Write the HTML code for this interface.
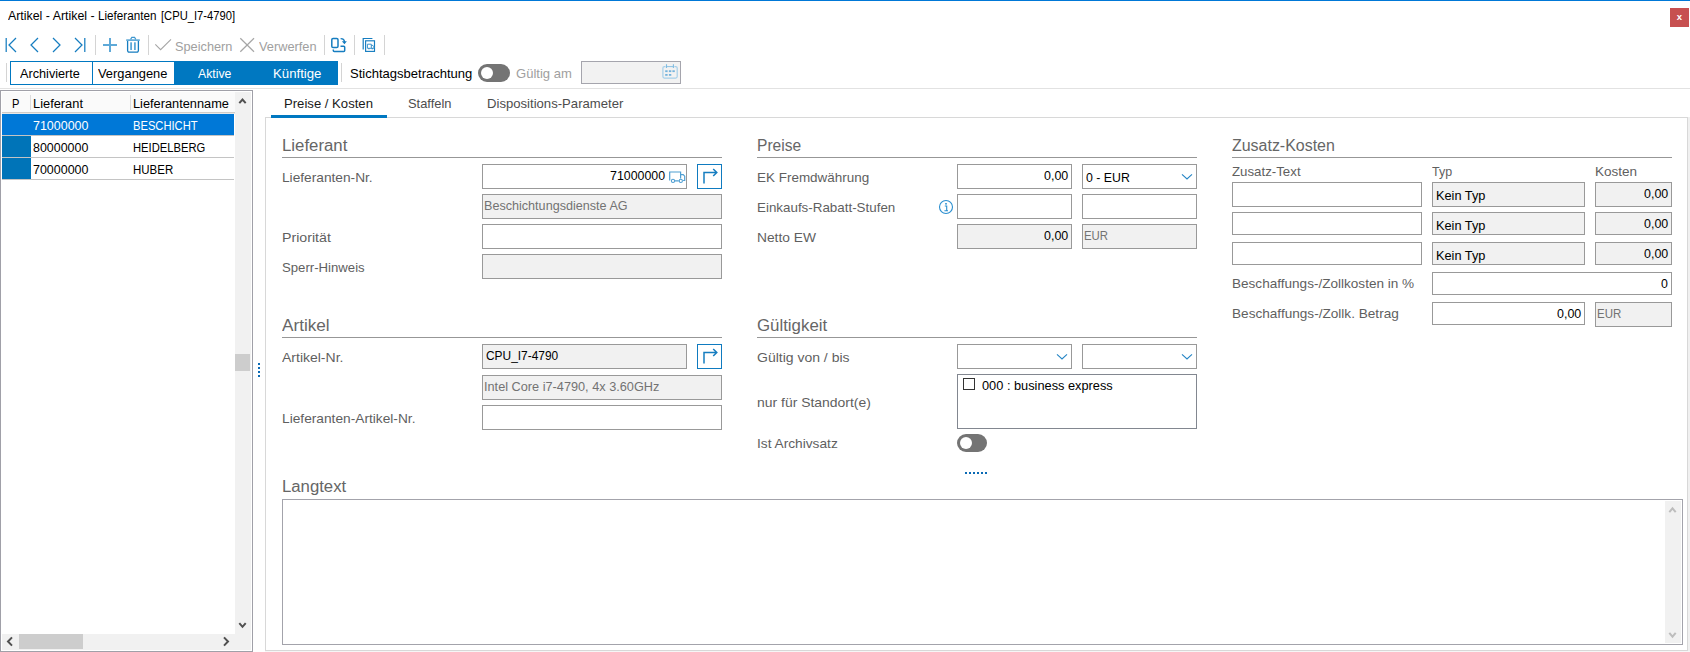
<!DOCTYPE html>
<html lang="de"><head><meta charset="utf-8"><title>Artikel - Lieferanten</title>
<style>
html,body{margin:0;padding:0}
body{width:1690px;height:652px;position:relative;overflow:hidden;background:#fff;font-family:"Liberation Sans",sans-serif;font-size:13px}
.b{position:absolute;border:1px solid #999;box-sizing:content-box}
.r{position:absolute}
.t{position:absolute;white-space:nowrap;transform-origin:0 0;display:block}
.s12{font-size:12px;line-height:20px;height:20px}
.s13{font-size:13px;line-height:21px;height:21px}
.s16{font-size:16px;line-height:21px;height:21px}
.ov{position:absolute;left:0;top:0;pointer-events:none}
.x{position:absolute;left:1670px;top:8px;width:19px;height:19px;line-height:17px;text-align:center;color:#fff;font-weight:bold;font-size:9.5px}
</style></head>
<body>
<div class="r" style="left:0px;top:0px;width:1690px;height:1px;background:#0078d7;"></div>
<div class="r" style="left:1670px;top:8px;width:19px;height:19px;background:#c75050;"></div>
<div class="r" style="left:95px;top:35px;width:1px;height:20px;background:#d4d4d4;"></div>
<div class="r" style="left:148px;top:35px;width:1px;height:20px;background:#d4d4d4;"></div>
<div class="r" style="left:324px;top:35px;width:1px;height:20px;background:#d4d4d4;"></div>
<div class="r" style="left:354px;top:35px;width:1px;height:20px;background:#d4d4d4;"></div>
<div class="r" style="left:384px;top:35px;width:1px;height:20px;background:#d4d4d4;"></div>
<div class="r" style="left:6px;top:63px;width:1px;height:19px;background:#d4d4d4;"></div>
<div class="r" style="left:10px;top:61px;width:328px;height:24px;background:#0078c1;"></div>
<div class="r" style="left:11px;top:62px;width:81px;height:22px;background:#fff;"></div>
<div class="r" style="left:93px;top:62px;width:81px;height:22px;background:#fff;"></div>
<div class="r" style="left:341px;top:63px;width:1px;height:19px;background:#d4d4d4;"></div>
<div class="r" style="left:478px;top:64px;width:32px;height:18px;border-radius:9px;background:#747474"></div>
<div class="r" style="left:481px;top:67px;width:12px;height:12px;border-radius:6px;background:#fff"></div>
<div class="b" style="left:581px;top:61px;width:98px;height:21px;background:#f2f2f2;border-color:#a5a5ad;"></div>
<div class="r" style="left:0px;top:88px;width:1690px;height:1px;background:#e2e2e2;"></div>
<div class="b" style="left:0px;top:90px;width:251px;height:560px;background:#fff;border-color:#a0a0a8;"></div>
<div class="r" style="left:2px;top:92px;width:233px;height:20px;background:#fafafa;"></div>
<div class="r" style="left:2px;top:112px;width:233px;height:1px;background:#d0ccc8;"></div>
<div class="r" style="left:2px;top:113px;width:233px;height:1px;background:#e8e8e8;"></div>
<div class="r" style="left:30px;top:95px;width:1px;height:15px;background:#dcdcdc;"></div>
<div class="r" style="left:130px;top:95px;width:1px;height:15px;background:#dcdcdc;"></div>
<div class="r" style="left:235px;top:92px;width:16px;height:558px;background:#f1f1f1;"></div>
<div class="r" style="left:2px;top:634px;width:233px;height:16px;background:#f1f1f1;"></div>
<div class="r" style="left:235px;top:354px;width:15px;height:17px;background:#cdcdcd;"></div>
<div class="r" style="left:19px;top:634px;width:64px;height:15px;background:#cdcdcd;"></div>
<div class="r" style="left:2px;top:114px;width:232px;height:21px;background:#0078d7;"></div>
<div class="r" style="left:2px;top:136px;width:29px;height:21px;background:#0074b8;"></div>
<div class="r" style="left:2px;top:158px;width:29px;height:21px;background:#0074b8;"></div>
<div class="r" style="left:2px;top:135px;width:232px;height:1px;background:#c4c4c4;"></div>
<div class="r" style="left:2px;top:157px;width:232px;height:1px;background:#c4c4c4;"></div>
<div class="r" style="left:2px;top:179px;width:232px;height:1px;background:#c4c4c4;"></div>
<div class="r" style="left:258px;top:363px;width:2px;height:2px;background:#0a6ab5;"></div>
<div class="r" style="left:258px;top:367px;width:2px;height:2px;background:#0a6ab5;"></div>
<div class="r" style="left:258px;top:371px;width:2px;height:2px;background:#0a6ab5;"></div>
<div class="r" style="left:258px;top:375px;width:2px;height:2px;background:#0a6ab5;"></div>
<div class="b" style="left:265px;top:117px;width:1421px;height:532px;background:#fff;border-color:#d8d8d8;"></div>
<div class="r" style="left:1688px;top:117px;width:2px;height:535px;background:#f0f0f0;"></div>
<div class="r" style="left:265px;top:651px;width:1425px;height:1px;background:#f6f6f6;"></div>
<div class="r" style="left:271px;top:115px;width:116px;height:3px;background:#0078c1;"></div>
<div class="r" style="left:282px;top:157px;width:440px;height:1px;background:#979797;"></div>
<div class="r" style="left:757px;top:157px;width:440px;height:1px;background:#979797;"></div>
<div class="r" style="left:1232px;top:157px;width:440px;height:1px;background:#979797;"></div>
<div class="r" style="left:282px;top:337px;width:440px;height:1px;background:#979797;"></div>
<div class="r" style="left:757px;top:337px;width:440px;height:1px;background:#979797;"></div>
<div class="b" style="left:482px;top:164px;width:203px;height:23px;background:#fff;border-color:#999999;"></div>
<div class="b" style="left:697px;top:164px;width:23px;height:23px;background:#fff;border-color:#0f7bc0;"></div>
<div class="b" style="left:482px;top:194px;width:238px;height:23px;background:#f1f1f1;border-color:#999999;"></div>
<div class="b" style="left:482px;top:224px;width:238px;height:23px;background:#fff;border-color:#999999;"></div>
<div class="b" style="left:482px;top:254px;width:238px;height:23px;background:#f1f1f1;border-color:#999999;"></div>
<div class="b" style="left:482px;top:344px;width:203px;height:23px;background:#f1f1f1;border-color:#999999;"></div>
<div class="b" style="left:697px;top:344px;width:23px;height:23px;background:#fff;border-color:#0f7bc0;"></div>
<div class="b" style="left:482px;top:375px;width:238px;height:23px;background:#f1f1f1;border-color:#999999;"></div>
<div class="b" style="left:482px;top:405px;width:238px;height:23px;background:#fff;border-color:#999999;"></div>
<div class="b" style="left:957px;top:164px;width:113px;height:23px;background:#fff;border-color:#999999;"></div>
<div class="b" style="left:1082px;top:164px;width:113px;height:23px;background:#fff;border-color:#999999;"></div>
<div class="b" style="left:957px;top:194px;width:113px;height:23px;background:#fff;border-color:#999999;"></div>
<div class="b" style="left:1082px;top:194px;width:113px;height:23px;background:#fff;border-color:#999999;"></div>
<div class="b" style="left:957px;top:224px;width:113px;height:23px;background:#f1f1f1;border-color:#999999;"></div>
<div class="b" style="left:1082px;top:224px;width:113px;height:23px;background:#f1f1f1;border-color:#999999;"></div>
<div class="b" style="left:957px;top:344px;width:113px;height:23px;background:#fff;border-color:#999999;"></div>
<div class="b" style="left:1082px;top:344px;width:113px;height:23px;background:#fff;border-color:#999999;"></div>
<div class="b" style="left:957px;top:374px;width:238px;height:53px;background:#fff;border-color:#828790;"></div>
<div class="b" style="left:963px;top:378px;width:10px;height:10px;background:#fff;border-color:#333;"></div>
<div class="r" style="left:957px;top:434px;width:30px;height:18px;border-radius:9px;background:#747474"></div>
<div class="r" style="left:960px;top:437px;width:12px;height:12px;border-radius:6px;background:#fff"></div>
<div class="r" style="left:965px;top:472px;width:2px;height:2px;background:#0a6ab5;"></div>
<div class="r" style="left:969px;top:472px;width:2px;height:2px;background:#0a6ab5;"></div>
<div class="r" style="left:973px;top:472px;width:2px;height:2px;background:#0a6ab5;"></div>
<div class="r" style="left:977px;top:472px;width:2px;height:2px;background:#0a6ab5;"></div>
<div class="r" style="left:981px;top:472px;width:2px;height:2px;background:#0a6ab5;"></div>
<div class="r" style="left:985px;top:472px;width:2px;height:2px;background:#0a6ab5;"></div>
<div class="b" style="left:1232px;top:182px;width:188px;height:23px;background:#fff;border-color:#999999;"></div>
<div class="b" style="left:1432px;top:182px;width:151px;height:23px;background:#f1f1f1;border-color:#999999;"></div>
<div class="b" style="left:1595px;top:182px;width:75px;height:23px;background:#f1f1f1;border-color:#999999;"></div>
<div class="b" style="left:1232px;top:212px;width:188px;height:21px;background:#fff;border-color:#999999;"></div>
<div class="b" style="left:1432px;top:212px;width:151px;height:21px;background:#f1f1f1;border-color:#999999;"></div>
<div class="b" style="left:1595px;top:212px;width:75px;height:21px;background:#f1f1f1;border-color:#999999;"></div>
<div class="b" style="left:1232px;top:242px;width:188px;height:21px;background:#fff;border-color:#999999;"></div>
<div class="b" style="left:1432px;top:242px;width:151px;height:21px;background:#f1f1f1;border-color:#999999;"></div>
<div class="b" style="left:1595px;top:242px;width:75px;height:21px;background:#f1f1f1;border-color:#999999;"></div>
<div class="b" style="left:1432px;top:272px;width:238px;height:21px;background:#fff;border-color:#999999;"></div>
<div class="b" style="left:1432px;top:302px;width:151px;height:21px;background:#fff;border-color:#999999;"></div>
<div class="b" style="left:1595px;top:302px;width:75px;height:23px;background:#f1f1f1;border-color:#999999;"></div>
<div class="b" style="left:282px;top:499px;width:1399px;height:144px;background:#fff;border-color:#a3a3ab;"></div>
<div class="r" style="left:1665px;top:501px;width:16px;height:142px;background:#f1f1f1;"></div>
<svg class="ov" width="1690" height="652" viewBox="0 0 1690 652"><polyline points="6.2,38 6.2,52" fill="none" stroke="#167dc0" stroke-width="1.25" /><polyline points="16,38 9,45 16,52" fill="none" stroke="#167dc0" stroke-width="1.25" /><polyline points="38,38 31,45 38,52" fill="none" stroke="#167dc0" stroke-width="1.25" /><polyline points="53,38 60,45 53,52" fill="none" stroke="#167dc0" stroke-width="1.25" /><polyline points="75,38 82,45 75,52" fill="none" stroke="#167dc0" stroke-width="1.25" /><polyline points="84.8,38 84.8,52" fill="none" stroke="#167dc0" stroke-width="1.25" /><rect x="109" y="38" width="2" height="14" fill="#5ea9d8"/><rect x="103" y="44" width="14" height="2" fill="#5ea9d8"/><path d="M126.2 40.1h13.6" fill="none" stroke="#4c9fd3" stroke-width="1.5"/><path d="M130.6 39.4l1.2-2h2.8l1.2 2" fill="none" stroke="#3f97cf" stroke-width="1.1"/><path d="M127.6 41v9.6a1.6 1.6 0 0 0 1.6 1.6h7.6a1.6 1.6 0 0 0 1.6-1.6v-9.6" fill="none" stroke="#167dc0" stroke-width="1.3"/><rect x="130.2" y="42.3" width="1.8" height="7.7" fill="#5ea9d8"/><rect x="134" y="42.3" width="1.8" height="7.7" fill="#5ea9d8"/><polyline points="155.3,44.3 160.6,49.6 171,39.3" fill="none" stroke="#a6a6a6" stroke-width="1.1" /><polyline points="240.3,38.2 254,51.8" fill="none" stroke="#a6a6a6" stroke-width="1.2" /><polyline points="254,38.2 240.3,51.8" fill="none" stroke="#a6a6a6" stroke-width="1.2" /><rect x="331.8" y="38.5" width="6.2" height="9" rx="1.3" fill="none" stroke="#167dc0" stroke-width="1.5"/><path d="M333.3 49.4v1.2a1 1 0 0 0 1 1h9.4a1 1 0 0 0 1-1v-3.4a1 1 0 0 0-1-1h-3.2" fill="none" stroke="#167dc0" stroke-width="1.5"/><path d="M340.6 38.6c2.6 0 3.9 1.3 3.9 3.6" fill="none" stroke="#167dc0" stroke-width="1.4"/><path d="M341.9 41.3h5l-2.5 2.9z" fill="#167dc0"/><path d="M372.4 38.5h-9.2v10.9" fill="none" stroke="#167dc0" stroke-width="1.2"/><rect x="365.6" y="40.8" width="8.9" height="10.6" fill="none" stroke="#167dc0" stroke-width="1.15"/><path d="M367.4 48.2v-4h3.9v4M371.3 45.4h1.6l1 1.4v1.5h-6.5" fill="none" stroke="#3b93cc" stroke-width="1"/><rect x="368.2" y="48" width="1.4" height="1.3" fill="#3b93cc"/><rect x="371.6" y="48" width="1.4" height="1.3" fill="#3b93cc"/><path d="M665.5 66.6h-1.1a1.5 1.5 0 0 0-1.5 1.5v8.5a1.5 1.5 0 0 0 1.5 1.5h11.3a1.5 1.5 0 0 0 1.5-1.5v-8.5a1.5 1.5 0 0 0-1.5-1.5h-1.3" fill="none" stroke="#a6cfe9" stroke-width="1.2"/><path d="M666.5 64.3v3.6M673.4 64.3v3.6" stroke="#7fbbe0" stroke-width="1.1" fill="none"/><path d="M667 66.6h6" stroke="#8cc2e3" stroke-width="1" fill="none"/><rect x="665.2" y="70.3" width="2.4" height="1.8" fill="#74b3dc"/><rect x="668.9" y="70.3" width="2.4" height="1.8" fill="#74b3dc"/><rect x="672.4" y="70.3" width="2.4" height="1.8" fill="#74b3dc"/><rect x="665.2" y="74" width="2.4" height="1.8" fill="#74b3dc"/><rect x="668.9" y="74" width="2.4" height="1.8" fill="#74b3dc"/><polyline points="239.3,103.2 242.5,99.6 245.7,103.2" fill="none" stroke="#505050" stroke-width="2.0" /><polyline points="239.3,623.2 242.5,626.8 245.7,623.2" fill="none" stroke="#505050" stroke-width="2.0" /><polyline points="12,637.4 8,641.5 12,645.6" fill="none" stroke="#505050" stroke-width="2.0" /><polyline points="224,637.4 228,641.5 224,645.6" fill="none" stroke="#505050" stroke-width="2.0" /><polyline points="1669.3,512.2 1672.5,508.4 1675.7,512.2" fill="none" stroke="#bdbdbd" stroke-width="2.0" /><polyline points="1669.3,632.8 1672.5,636.6 1675.7,632.8" fill="none" stroke="#bdbdbd" stroke-width="2.0" /><path d="M669.7 180.6v-8.6h10.9v6.5M680.6 174.6h2.6l1.5 1.6v4.3h-1.6M674.9 180.8h3.9" fill="none" stroke="#4f9fd2" stroke-width="1.2"/><circle cx="673" cy="180.9" r="1.6" fill="none" stroke="#4f9fd2" stroke-width="1.1"/><circle cx="680.8" cy="180.9" r="1.6" fill="none" stroke="#4f9fd2" stroke-width="1.1"/><path d="M704 183.6v-11.2h12.6M713.2 169l3.6 3.5-3.6 3.5" fill="none" stroke="#167dc0" stroke-width="1.5"/><path d="M704 363.6v-11.2h12.6M713.2 349l3.6 3.5-3.6 3.5" fill="none" stroke="#167dc0" stroke-width="1.5"/><circle cx="946" cy="207" r="6.5" fill="none" stroke="#2b8fd0" stroke-width="1.1"/><rect x="945.2" y="203" width="1.6" height="1.6" fill="#2b8fd0"/><path d="M944.8 206h1.9v4.6M944.4 210.7h3.6" stroke="#2b8fd0" stroke-width="1.1" fill="none"/><polyline points="1182,174.3 1187,178.9 1192,174.3" fill="none" stroke="#2585c5" stroke-width="1.1" /><polyline points="1057,354.3 1062,358.90000000000003 1067,354.3" fill="none" stroke="#2585c5" stroke-width="1.1" /><polyline points="1182,354.3 1187,358.90000000000003 1192,354.3" fill="none" stroke="#2585c5" stroke-width="1.1" /></svg>
<div class="x">x</div>
<span class="t s12" style="left:8px;top:6px;color:#000000;transform:scaleX(1.0307)">Artikel - Artikel -</span>
<span class="t s12" style="left:98px;top:6px;color:#000000;transform:scaleX(0.9728)">Lieferanten</span>
<span class="t s12" style="left:161px;top:6px;color:#000000;transform:scaleX(0.9335)">[CPU_I7-4790]</span>
<span class="t s13" style="left:175px;top:36px;color:#a0a0a0;transform:scaleX(0.9807)">Speichern</span>
<span class="t s13" style="left:259px;top:36px;color:#a0a0a0;transform:scaleX(0.9839)">Verwerfen</span>
<span class="t s13" style="left:20px;top:63px;color:#000000;transform:scaleX(0.9753)">Archivierte</span>
<span class="t s13" style="left:98px;top:63px;color:#000000;transform:scaleX(0.9901)">Vergangene</span>
<span class="t s13" style="left:198px;top:63px;color:#ffffff;transform:scaleX(0.9426)">Aktive</span>
<span class="t s13" style="left:273px;top:63px;color:#ffffff;transform:scaleX(1.0161)">Künftige</span>
<span class="t s13" style="left:350px;top:63px;color:#000000;transform:scaleX(1.0016)">Stichtagsbetrachtung</span>
<span class="t s13" style="left:516px;top:63px;color:#a0a0a0;transform:scaleX(1.0033)">Gültig am</span>
<span class="t s12" style="left:12px;top:94px;color:#000000;transform:scaleX(0.9238)">P</span>
<span class="t s12" style="left:33px;top:94px;color:#000000;transform:scaleX(1.0695)">Lieferant</span>
<span class="t s12" style="left:133px;top:94px;color:#000000;transform:scaleX(1.0650)">Lieferantenname</span>
<span class="t s12" style="left:33px;top:116px;color:#ffffff;transform:scaleX(1.0381)">71000000</span>
<span class="t s12" style="left:133px;top:116px;color:#ffffff;transform:scaleX(0.9313)">BESCHICHT</span>
<span class="t s12" style="left:33px;top:138px;color:#000000;transform:scaleX(1.0363)">80000000</span>
<span class="t s12" style="left:133px;top:138px;color:#000000;transform:scaleX(0.9341)">HEIDELBERG</span>
<span class="t s12" style="left:33px;top:160px;color:#000000;transform:scaleX(1.0381)">70000000</span>
<span class="t s12" style="left:133px;top:160px;color:#000000;transform:scaleX(0.9564)">HUBER</span>
<span class="t s13" style="left:284px;top:93px;color:#1a1a1a;transform:scaleX(1.0087)">Preise / Kosten</span>
<span class="t s13" style="left:408px;top:93px;color:#4d4d4d;transform:scaleX(0.9914)">Staffeln</span>
<span class="t s13" style="left:487px;top:93px;color:#4d4d4d;transform:scaleX(1.0092)">Dispositions-Parameter</span>
<span class="t s16" style="left:282px;top:135px;color:#666666;transform:scaleX(1.0487)">Lieferant</span>
<span class="t s16" style="left:757px;top:135px;color:#666666;transform:scaleX(0.9740)">Preise</span>
<span class="t s16" style="left:1232px;top:135px;color:#666666;transform:scaleX(0.9970)">Zusatz-Kosten</span>
<span class="t s16" style="left:282px;top:315px;color:#666666;transform:scaleX(1.0726)">Artikel</span>
<span class="t s16" style="left:757px;top:315px;color:#666666;transform:scaleX(1.0521)">Gültigkeit</span>
<span class="t s16" style="left:282px;top:476px;color:#666666;transform:scaleX(1.0458)">Langtext</span>
<span class="t s13" style="left:282px;top:167px;color:#5f5f5f;transform:scaleX(1.0545)">Lieferanten-Nr.</span>
<span class="t s13" style="left:282px;top:227px;color:#5f5f5f;transform:scaleX(1.0911)">Priorität</span>
<span class="t s13" style="left:282px;top:257px;color:#5f5f5f;transform:scaleX(1.0128)">Sperr-Hinweis</span>
<span class="t s13" style="left:282px;top:347px;color:#5f5f5f;transform:scaleX(1.0762)">Artikel-Nr.</span>
<span class="t s13" style="left:282px;top:408px;color:#5f5f5f;transform:scaleX(1.0557)">Lieferanten-Artikel-Nr.</span>
<span class="t s13" style="left:757px;top:167px;color:#5f5f5f;transform:scaleX(1.0359)">EK Fremdwährung</span>
<span class="t s13" style="left:757px;top:197px;color:#5f5f5f;transform:scaleX(1.0287)">Einkaufs-Rabatt-Stufen</span>
<span class="t s13" style="left:757px;top:227px;color:#5f5f5f;transform:scaleX(1.0603)">Netto EW</span>
<span class="t s13" style="left:757px;top:347px;color:#5f5f5f;transform:scaleX(1.0759)">Gültig von / bis</span>
<span class="t s13" style="left:757px;top:392px;color:#5f5f5f;transform:scaleX(1.0718)">nur für Standort(e)</span>
<span class="t s13" style="left:757px;top:433px;color:#5f5f5f;transform:scaleX(1.0544)">Ist Archivsatz</span>
<span class="t s13" style="left:1232px;top:161px;color:#5f5f5f;transform:scaleX(1.0206)">Zusatz-Text</span>
<span class="t s13" style="left:1432px;top:161px;color:#5f5f5f;transform:scaleX(0.9594)">Typ</span>
<span class="t s13" style="left:1595px;top:161px;color:#5f5f5f;transform:scaleX(1.0386)">Kosten</span>
<span class="t s13" style="left:1232px;top:273px;color:#5f5f5f;transform:scaleX(1.0430)">Beschaffungs-/Zollkosten in %</span>
<span class="t s13" style="left:1232px;top:303px;color:#5f5f5f;transform:scaleX(1.0460)">Beschaffungs-/Zollk. Betrag</span>
<span class="t s13" style="left:610px;top:165px;color:#000000;transform:scaleX(0.9512)">71000000</span>
<span class="t s13" style="left:484px;top:195px;color:#737373;transform:scaleX(0.9692)">Beschichtungsdienste AG</span>
<span class="t s13" style="left:486px;top:345px;color:#000000;transform:scaleX(0.9162)">CPU_I7-4790</span>
<span class="t s13" style="left:484px;top:376px;color:#737373;transform:scaleX(0.9785)">Intel Core i7-4790, 4x 3.60GHz</span>
<span class="t s13" style="left:1044px;top:165px;color:#000000;transform:scaleX(0.9594)">0,00</span>
<span class="t s13" style="left:1086px;top:167px;color:#000000;transform:scaleX(0.9486)">0 - EUR</span>
<span class="t s13" style="left:1044px;top:225px;color:#000000;transform:scaleX(0.9594)">0,00</span>
<span class="t s13" style="left:1084px;top:225px;color:#737373;transform:scaleX(0.8748)">EUR</span>
<span class="t s13" style="left:982px;top:375px;color:#000000;transform:scaleX(0.9834)">000 : business express</span>
<span class="t s13" style="left:1436px;top:185px;color:#000000;transform:scaleX(0.9822)">Kein Typ</span>
<span class="t s13" style="left:1436px;top:215px;color:#000000;transform:scaleX(0.9822)">Kein Typ</span>
<span class="t s13" style="left:1436px;top:245px;color:#000000;transform:scaleX(0.9822)">Kein Typ</span>
<span class="t s13" style="left:1644px;top:183px;color:#000000;transform:scaleX(0.9573)">0,00</span>
<span class="t s13" style="left:1644px;top:213px;color:#000000;transform:scaleX(0.9573)">0,00</span>
<span class="t s13" style="left:1644px;top:243px;color:#000000;transform:scaleX(0.9573)">0,00</span>
<span class="t s13" style="left:1661px;top:273px;color:#000000;transform:scaleX(0.9494)">0</span>
<span class="t s13" style="left:1557px;top:303px;color:#000000;transform:scaleX(0.9573)">0,00</span>
<span class="t s13" style="left:1597px;top:303px;color:#737373;transform:scaleX(0.8845)">EUR</span>
</body></html>
